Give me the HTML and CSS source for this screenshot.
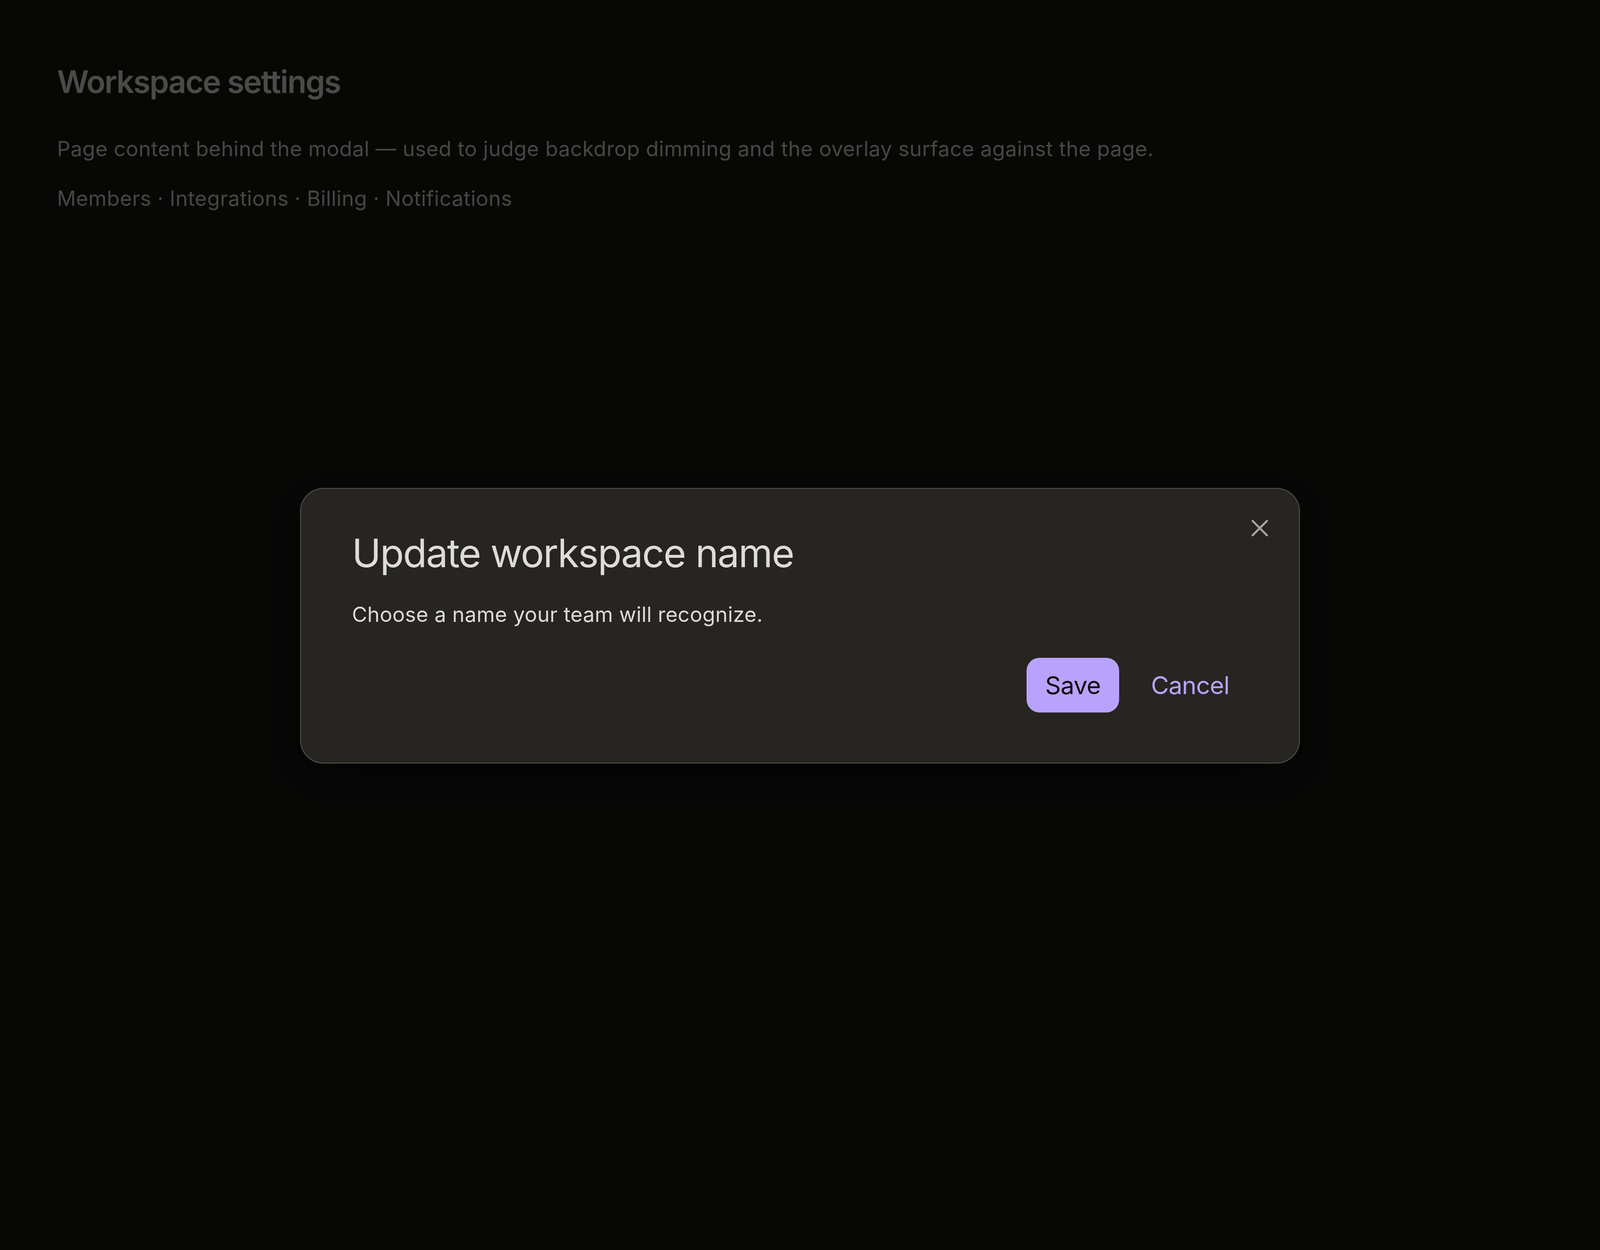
FILE: index.html
```html
<!DOCTYPE html>
<html lang="en">
<head>
<meta charset="utf-8">
<title>Workspace settings</title>
<link rel="stylesheet" href="styles.css">
</head>
<body>
<main class="page">
  <h1 class="page-title">Workspace settings</h1>
  <p class="page-lead">Page content behind the modal — used to judge backdrop dimming and the overlay surface against the page.</p>
  <p class="page-links">Members · Integrations · Billing · Notifications</p>
</main>

<div class="backdrop">
  <section class="dialog" role="dialog" aria-modal="true" aria-labelledby="dlg-title">
    <button class="dialog-close" type="button" aria-label="Close">
      <svg class="close-icon" viewBox="0 0 42 42" width="42" height="42" aria-hidden="true">
        <line x1="2.7" y1="2.7" x2="39.3" y2="39.3"/>
        <line x1="39.3" y1="2.7" x2="2.7" y2="39.3"/>
      </svg>
    </button>
    <h2 class="dialog-title" id="dlg-title">Update workspace name</h2>
    <p class="dialog-text">Choose a name your team will recognize.</p>
    <div class="dialog-actions">
      <button class="btn btn-primary" type="button">Save</button>
      <button class="btn btn-ghost" type="button">Cancel</button>
    </div>
  </section>
</div>
</body>
</html>
```
FILE: styles.css
```css
* { box-sizing: border-box; }

html, body {
  margin: 0;
  height: 100%;
}

body {
  background: #181816;
  font-family: Inter, "Noto Sans", "Liberation Sans", sans-serif;
  color: #f5f5f4;
}

.page {
  padding: 160px 0 0 146px;
}

.page-title {
  margin: 0;
  font-size: 80px;
  font-weight: 600;
  line-height: normal;
  letter-spacing: -2.4px;
  color: #f8f8f6;
}

.page-lead,
.page-links {
  font-size: 53.33px;
  line-height: normal;
  letter-spacing: 0.5px;
  color: #ebe9e6;
}

.page-lead {
  margin: 91px 0 0;
}

.page-links {
  margin: 62px 0 0;
}

.backdrop {
  position: fixed;
  inset: 0;
  background: rgba(0, 0, 0, 0.7);
  display: flex;
  align-items: center;
  justify-content: center;
}

.dialog {
  position: relative;
  width: 2560px;
  margin-top: 4px;
  padding: 103px 130px 128px;
  background: #262521;
  border: 3px solid #46453f;
  border-radius: 60px;
  box-shadow: 0 30px 100px rgba(0, 0, 0, 0.5);
}

.dialog-close {
  position: absolute;
  top: 40px;
  right: 40px;
  width: 120px;
  height: 120px;
  padding: 0;
  border: none;
  background: transparent;
  display: flex;
  align-items: center;
  justify-content: center;
  cursor: pointer;
}

.close-icon {
  display: block;
  stroke: #a5a4a0;
  stroke-width: 5.3;
  stroke-linecap: round;
  fill: none;
}

.dialog-title {
  margin: 0;
  font-size: 100px;
  font-weight: 400;
  line-height: normal;
  letter-spacing: -2.4px;
  color: #dddcd7;
}

.dialog-text {
  margin: 64px 0 0;
  font-size: 53.33px;
  line-height: normal;
  letter-spacing: 0.35px;
  color: #dcdbd6;
}

.dialog-actions {
  margin-top: 79px;
  display: flex;
  justify-content: flex-end;
  gap: 33px;
}

.btn {
  height: 140px;
  padding: 0 48px;
  border: none;
  border-radius: 33px;
  font-family: inherit;
  font-size: 63px;
  font-weight: 400;
  line-height: 1;
  letter-spacing: -1px;
  cursor: pointer;
}

.btn-primary {
  background: #b9a2fd;
  color: #0f0e0d;
}

.btn-ghost {
  background: transparent;
  color: #b9a2fd;
}
```
